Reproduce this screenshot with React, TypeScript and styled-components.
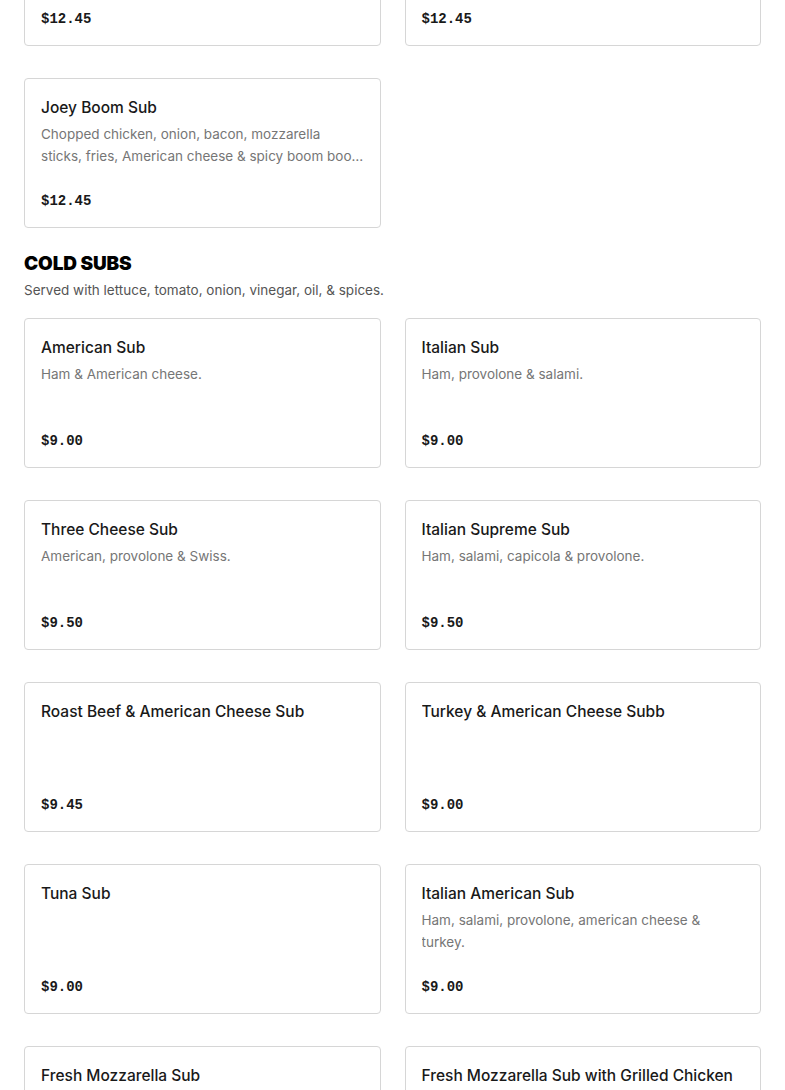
import React from "react";
import styled, { createGlobalStyle } from "styled-components";

const GlobalStyle = createGlobalStyle`
  html, body { margin: 0; padding: 0; background: #ffffff; }
  body { font-family: Inter, "Noto Sans", "Liberation Sans", sans-serif; color: #191919; overflow: hidden; }
  * { box-sizing: border-box; }
`;

const Page = styled.div`
  padding: 0 24px;
  margin-top: -104px;
  display: flex;
  flex-direction: column;
`;

const Section = styled.section`
  display: flex;
  flex-direction: column;
`;

const SectionHeader = styled.header`
  display: flex;
  flex-direction: column;
  padding: 24px 0 17px;
`;

const SectionTitle = styled.h2`
  margin: 0;
  font-family: Inter, "Liberation Sans", sans-serif;
  font-weight: 900;
  font-size: 19px;
  line-height: 24px;
  letter-spacing: -0.15px;
  color: #000000;
  text-transform: uppercase;
`;

const SectionNote = styled.p`
  margin: 3px 0 0;
  font-size: 13.5px;
  line-height: 22px;
  color: #555555;
`;

const Grid = styled.div`
  display: grid;
  grid-template-columns: minmax(0, 1fr) minmax(0, 1fr);
  column-gap: 24px;
  row-gap: 32px;
`;

const Card = styled.article`
  height: 150px;
  border: 1px solid #d6d6d6;
  border-radius: 4px;
  padding: 16px;
  display: flex;
  flex-direction: column;
  background: #fff;
  min-width: 0;
`;

const Title = styled.h3`
  margin: 1px 0 0;
  font-size: 15.5px;
  font-weight: 550;
  line-height: 24px;
  color: #191919;
  white-space: nowrap;
  overflow: hidden;
  text-overflow: ellipsis;
`;

const Desc = styled.p`
  margin: 3px 0 0;
  font-size: 13.5px;
  line-height: 22px;
  color: #767676;
  display: -webkit-box;
  -webkit-line-clamp: 2;
  -webkit-box-orient: vertical;
  overflow: hidden;
`;

const Price = styled.span`
  margin-top: auto;
  font-family: "Liberation Mono", "DejaVu Sans Mono", monospace;
  font-weight: 700;
  font-size: 14px;
  line-height: 20px;
  color: #191919;
`;

type Item = { name: string; desc?: string; price: string };

const hotTail: Item[] = [
  { name: "Chicken Cheesesteak Sub", desc: "Chopped chicken, onion & American cheese.", price: "$12.45" },
  { name: "Buffalo Chicken Sub", desc: "Chopped chicken, buffalo sauce & American cheese.", price: "$12.45" },
  {
    name: "Joey Boom Sub",
    desc: "Chopped chicken, onion, bacon, mozzarella sticks, fries, American cheese & spicy boom boom sauce.",
    price: "$12.45",
  },
];

const coldSubs: Item[] = [
  { name: "American Sub", desc: "Ham & American cheese.", price: "$9.00" },
  { name: "Italian Sub", desc: "Ham, provolone & salami.", price: "$9.00" },
  { name: "Three Cheese Sub", desc: "American, provolone & Swiss.", price: "$9.50" },
  { name: "Italian Supreme Sub", desc: "Ham, salami, capicola & provolone.", price: "$9.50" },
  { name: "Roast Beef & American Cheese Sub", price: "$9.45" },
  { name: "Turkey & American Cheese Subb", price: "$9.00" },
  { name: "Tuna Sub", price: "$9.00" },
  { name: "Italian American Sub", desc: "Ham, salami, provolone, american cheese & turkey.", price: "$9.00" },
  { name: "Fresh Mozzarella Sub", desc: "Fresh mozzarella, tomato & basil.", price: "$9.50" },
  { name: "Fresh Mozzarella Sub with Grilled Chicken", desc: "Fresh mozzarella, grilled chicken, tomato & basil.", price: "$11.50" },
];

const MenuCard = ({ item }: { item: Item }) => (
  <Card>
    <Title>{item.name}</Title>
    {item.desc && <Desc>{item.desc}</Desc>}
    <Price>{item.price}</Price>
  </Card>
);

export default function App() {
  return (
    <>
      <GlobalStyle />
      <Page>
        <Section>
          <Grid>
            {hotTail.map((it) => (
              <MenuCard key={it.name} item={it} />
            ))}
          </Grid>
        </Section>
        <Section>
          <SectionHeader>
            <SectionTitle>Cold Subs</SectionTitle>
            <SectionNote>Served with lettuce, tomato, onion, vinegar, oil, &amp; spices.</SectionNote>
          </SectionHeader>
          <Grid>
            {coldSubs.map((it) => (
              <MenuCard key={it.name} item={it} />
            ))}
          </Grid>
        </Section>
      </Page>
    </>
  );
}
